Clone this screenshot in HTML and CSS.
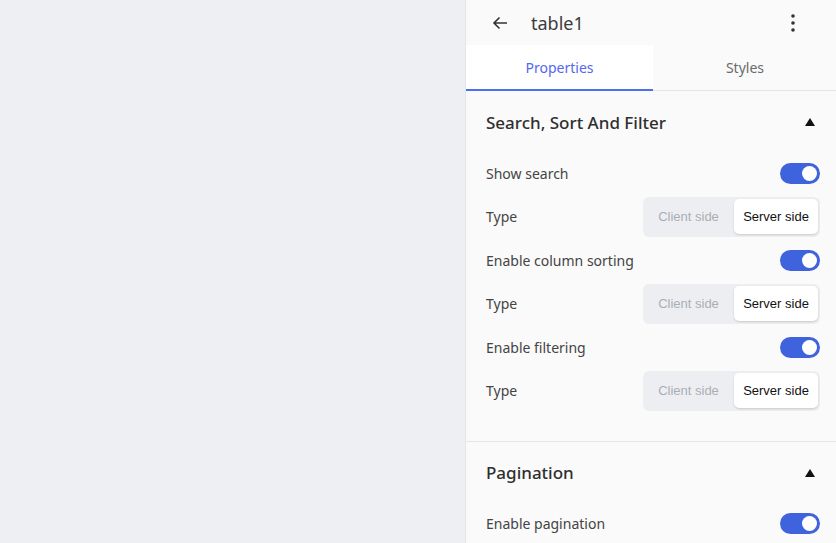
FILE: index.html
```html
<!DOCTYPE html>
<html>
<head>
<meta charset="utf-8">
<link rel="stylesheet" href="styles.css">
</head>
<body>
<div class="app">
  <div class="canvas"></div>
  <aside class="panel">
    <div class="header">
      <svg class="back" width="16" height="14" viewBox="0 0 16 14"><path d="M15 7H2M7.5 1.5L2 7l5.5 5.5" fill="none" stroke="#333" stroke-width="1.6"/></svg>
      <span class="title">table1</span>
      <svg class="kebab" width="6" height="18" viewBox="0 0 6 18"><circle cx="3" cy="2" r="1.8" fill="#333"/><circle cx="3" cy="9" r="1.8" fill="#333"/><circle cx="3" cy="16" r="1.8" fill="#333"/></svg>
    </div>
    <div class="tabs">
      <div class="tab active">Properties</div>
      <div class="tab">Styles</div>
    </div>
    <section class="section">
      <div class="sec-head"><span>Search, Sort And Filter</span><span class="tri"></span></div>
      <div class="rows">
        <div class="row"><span class="label">Show search</span><span class="toggle"><span class="knob"></span></span></div>
        <div class="row"><span class="label">Type</span><div class="seg"><span class="opt">Client side</span><span class="opt on">Server side</span></div></div>
        <div class="row"><span class="label">Enable column sorting</span><span class="toggle"><span class="knob"></span></span></div>
        <div class="row"><span class="label">Type</span><div class="seg"><span class="opt">Client side</span><span class="opt on">Server side</span></div></div>
        <div class="row"><span class="label">Enable filtering</span><span class="toggle"><span class="knob"></span></span></div>
        <div class="row"><span class="label">Type</span><div class="seg"><span class="opt">Client side</span><span class="opt on">Server side</span></div></div>
      </div>
    </section>
    <section class="section">
      <div class="sec-head"><span>Pagination</span><span class="tri"></span></div>
      <div class="rows">
        <div class="row"><span class="label">Enable pagination</span><span class="toggle"><span class="knob"></span></span></div>
      </div>
    </section>
  </aside>
</div>
</body>
</html>
```
FILE: styles.css
```css
* { box-sizing: border-box; }
html, body { margin: 0; padding: 0; height: 100%; overflow: hidden; }
body { font-family: "Noto Sans", "Liberation Sans", sans-serif; }
.app { display: flex; height: 543px; }
.canvas { flex: 1; background: #edeff3; }
.panel { width: 371px; background: #fafafa; border-left: 1px solid #e4e5e8; }
.header { height: 45px; display: flex; align-items: center; padding: 0 0 0 26px; }
.back { display: block; margin-top: 1px; }
.title { margin-left: 23px; font-size: 18px; color: #3d3b3b; }
.kebab { display: block; margin-left: auto; margin-right: 40px; }
.tabs { display: flex; height: 46px; border-bottom: 1px solid #e6e6e6; }
.tab { flex: 0 0 184px; display: flex; align-items: center; justify-content: center; font-size: 14px; color: #6b6b6b; }
.tab.active { flex-basis: 187px; background: #fff; color: #5468ee; border-bottom: 2px solid #4a6ff0; margin-bottom: -1px; }
.section { padding: 12px 16px 30px 20px; border-bottom: 1px solid #e6e6e6; }
.sec-head { height: 38px; display: flex; align-items: center; justify-content: space-between; font-size: 17px; font-weight: 500; color: #2f2f2f; margin-bottom: 12px; }
.tri { width: 0; height: 0; border-left: 5px solid transparent; border-right: 5px solid transparent; border-bottom: 8px solid #111; margin-right: 5px; }
.rows { display: flex; flex-direction: column; gap: 3.6px; }
.row { height: 40px; display: flex; align-items: center; justify-content: space-between; }
.label { font-size: 14px; color: #444; }
.toggle { width: 40px; height: 21px; border-radius: 11px; background: #3f63dc; display: flex; align-items: center; justify-content: flex-end; padding-right: 3px; }
.knob { width: 15px; height: 15px; border-radius: 50%; background: #fff; }
.seg { width: 177px; height: 40px; background: #edeef1; border-radius: 6px; display: flex; align-items: center; padding: 0 2px 1px 0; }
.opt { display: flex; align-items: center; justify-content: center; font-family: "Liberation Sans", Arial, sans-serif; font-size: 13px; color: #a9aeb6; height: 35px; }
.opt:first-child { width: 91px; }
.opt.on { width: 84px; background: #fff; color: #111; border-radius: 5px; box-shadow: 0 1px 2px rgba(0,0,0,0.15); }
```
